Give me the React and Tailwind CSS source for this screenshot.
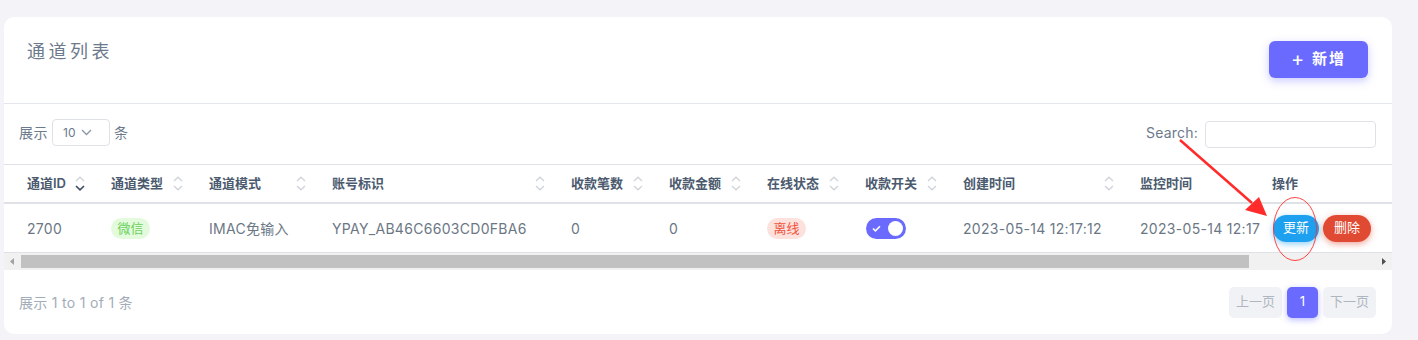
import React from "react";

const FONT = { fontFamily: 'Inter, "Noto Sans CJK SC", sans-serif' };

function SortIcon({ active }) {
  return (
    <svg width="10" height="15" viewBox="0 0 10 15" className="shrink-0">
      <path d="M1 5 L5 1.2 L9 5" fill="none" stroke="#cfd4da" strokeWidth="1.3" />
      <path d="M1 10 L5 13.8 L9 10" fill="none" stroke={active ? "#3f4d63" : "#cfd4da"} strokeWidth={active ? 1.7 : 1.3} />
    </svg>
  );
}

const cols = [
  { t: "通道ID", w: "w-[84px]", s: true, active: true },
  { t: "通道类型", w: "w-[98px]", s: true },
  { t: "通道模式", w: "w-[123px]", s: true },
  { t: "账号标识", w: "w-[239px]", s: true },
  { t: "收款笔数", w: "w-[98px]", s: true },
  { t: "收款金额", w: "w-[98px]", s: true },
  { t: "在线状态", w: "w-[98px]", s: true },
  { t: "收款开关", w: "w-[98px]", s: true },
  { t: "创建时间", w: "w-[177px]", s: true },
];

export default function App() {
  return (
    <div className="w-[1418px] h-[340px] bg-[#f3f3f8] relative overflow-hidden" style={FONT}>
      <div className="h-[17px]" />
      <div className="ml-[4px] w-[1388px] h-[317px] bg-white rounded-[10px] flex flex-col overflow-hidden">
        {/* header */}
        <div className="h-[86px] flex justify-between pl-[23px] pr-[24px]">
          <div className="pt-[23px] text-[18px] leading-[24px] tracking-[3.5px] text-[#6c7a8c]">通道列表</div>
          <div className="pt-[24px]">
            <button className="w-[99px] h-[37px] rounded-[6px] bg-[#6a6aff] text-white text-[15px] font-semibold tracking-[2px] flex items-center justify-center gap-[6px] shadow-[0_3px_8px_rgba(106,106,255,0.35)]">
              <span className="text-[20px] leading-none font-normal -mt-[2px]">+</span>
              <span>新增</span>
            </button>
          </div>
        </div>
        <div className="h-px bg-[#e3e6ea]" />
        {/* toolbar */}
        <div className="h-[60px] flex items-center justify-between pl-[15px] pr-[16px] text-[14px] text-[#6c7a8c]">
          <div className="flex items-center -mt-[3px]">
            <span className="tracking-[0.5px]">展示</span>
            <div className="ml-[4px] w-[58px] h-[27px] border border-[#dee2e6] rounded-[4px] flex items-center pl-[10px] gap-[6px] text-[12px] text-[#6c7a8c]">
              <span>10</span>
              <svg width="11" height="7" viewBox="0 0 11 7"><path d="M1 1 L5.5 5.5 L10 1" fill="none" stroke="#8a96a6" strokeWidth="1.3" /></svg>
            </div>
            <span className="ml-[4px]">条</span>
          </div>
          <div className="flex items-center gap-[7px]">
            <span className="-mt-[3px] tracking-[0.2px]">Search:</span>
            <div className="w-[171px] h-[27px] border border-[#dee2e6] rounded-[4px]" />
          </div>
        </div>
        {/* table */}
        <div className="h-px bg-[#dee2e6]" />
        <div className="h-[37px] flex items-center pl-[23px] text-[13px] font-semibold text-[#4b5a6e] border-b-2 border-[#dee2e6] box-content">
          {cols.map((c) => (
            <div key={c.t} className={`${c.w} shrink-0 flex items-center justify-between pr-[26px]`}>
              <span>{c.t}</span>
              {c.s && <SortIcon active={c.active} />}
            </div>
          ))}
          <div className="w-[120px] shrink-0">监控时间</div>
          <div className="pl-[12px]">操作</div>
        </div>
        <div className="h-[49px] flex items-center pl-[23px] text-[14px] tracking-[0.3px] text-[#6b7785] border-b border-[#dee2e6]">
          <div className="w-[84px] shrink-0">2700</div>
          <div className="w-[98px] shrink-0">
            <span className="inline-flex items-center justify-center w-[39px] h-[21px] rounded-full bg-[#e3fbdc] text-[#6bd05b] text-[13px] tracking-normal">微信</span>
          </div>
          <div className="w-[123px] shrink-0">IMAC免输入</div>
          <div className="w-[239px] shrink-0">YPAY_AB46C6603CD0FBA6</div>
          <div className="w-[98px] shrink-0">0</div>
          <div className="w-[98px] shrink-0">0</div>
          <div className="w-[98px] shrink-0">
            <span className="inline-flex items-center justify-center w-[39px] h-[21px] rounded-full bg-[#fde1dc] text-[#f0533e] text-[13px] tracking-normal">离线</span>
          </div>
          <div className="w-[98px] shrink-0">
            <div className="w-[40px] h-[21px] rounded-full bg-[#6a6aff] flex items-center justify-between pl-[6px] pr-[3px] ml-[1px]">
              <svg width="9" height="7" viewBox="0 0 9 7"><path d="M1 3.5 L3.4 5.8 L8 1.2" fill="none" stroke="white" strokeWidth="1.6" /></svg>
              <div className="w-[15px] h-[15px] rounded-full bg-white" />
            </div>
          </div>
          <div className="w-[177px] shrink-0 whitespace-nowrap">2023-05-14 12:17:12</div>
          <div className="w-[120px] shrink-0 whitespace-nowrap overflow-hidden">2023-05-14 12:17:12</div>
          <div className="pl-[13px] flex items-center gap-[4px] tracking-normal">
            <button className="w-[46px] h-[27px] rounded-full bg-[#1ea0f0] text-white text-[13px] shadow-[0_2px_6px_rgba(30,160,240,0.5)]">更新</button>
            <button className="w-[48px] h-[27px] rounded-full bg-[#e04a33] text-white text-[13px] shadow-[0_2px_6px_rgba(224,74,51,0.5)]">删除</button>
          </div>
        </div>
        {/* scrollbar */}
        <div className="h-[17px] bg-[#f1f1f1] flex items-center">
          <div className="w-[17px] h-[17px] flex items-center justify-center">
            <svg width="5" height="7" viewBox="0 0 5 7"><path d="M4 0 L0 3.5 L4 7 Z" fill="#a3a3a3" /></svg>
          </div>
          <div className="w-[1228px] h-[13px] bg-[#c1c1c1]" />
          <div className="flex-1" />
          <div className="w-[17px] h-[17px] flex items-center justify-center">
            <svg width="5" height="7" viewBox="0 0 5 7"><path d="M1 0 L5 3.5 L1 7 Z" fill="#505050" /></svg>
          </div>
        </div>
        {/* footer */}
        <div className="flex-1 flex items-center justify-between pl-[15px] pr-[16px]">
          <span className="text-[14px] text-[#a3acb9] tracking-[0.3px]">展示 1 to 1 of 1 条</span>
          <div className="flex items-center gap-[5px] text-[13px]">
            <div className="w-[53px] h-[31px] rounded-[5px] bg-[#f1f2f6] text-[#b0b6c0] flex items-center justify-center">上一页</div>
            <div className="w-[31px] h-[31px] rounded-[5px] bg-[#6a6aff] text-white flex items-center justify-center shadow-[0_2px_6px_rgba(106,106,255,0.45)]">1</div>
            <div className="w-[53px] h-[31px] rounded-[5px] bg-[#f1f2f6] text-[#b0b6c0] flex items-center justify-center">下一页</div>
          </div>
        </div>
      </div>
      {/* annotation overlay */}
      <svg className="absolute left-0 top-0 pointer-events-none" width="1418" height="340" viewBox="0 0 1418 340">
        <path d="M1180 140 L1252 203" stroke="#ff2a2a" strokeWidth="2.5" fill="none" />
        <polygon points="1267,216 1245,210 1259,197" fill="#ff2a2a" />
        <ellipse cx="1295" cy="229" rx="21.5" ry="31.5" fill="none" stroke="#ff3030" strokeWidth="0.9" />
      </svg>
    </div>
  );
}
